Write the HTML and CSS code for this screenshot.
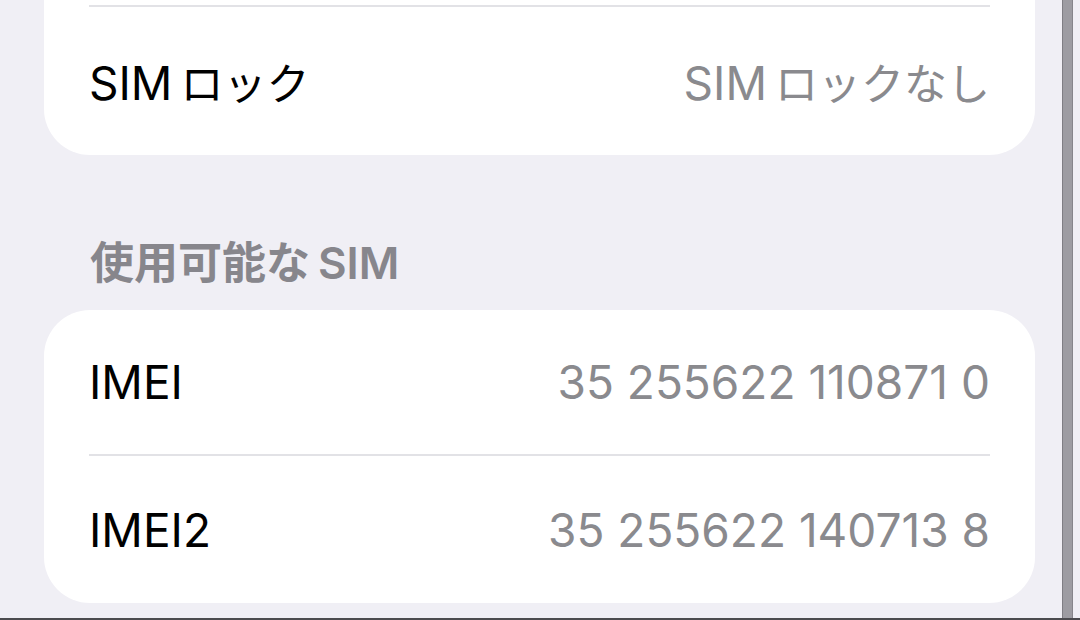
FILE: index.html
```html
<!DOCTYPE html>
<html lang="ja">
<head>
    <meta charset="UTF-8">
    <meta name="viewport" content="width=device-width, initial-scale=1.0">
    <title>SIM</title>
    <link rel="stylesheet" href="styles.css">
</head>
<body>
    <div class="screen">
        <div class="content">
            <div class="card card-top">
                <div class="row">
                    <span class="label">SIM<span class="gap"></span><span class="kana">ロック</span></span>
                    <span class="value">SIM<span class="gap"></span><span class="kana">ロックなし</span></span>
                </div>
            </div>

            <h2 class="section-title">使用可能な<span class="gap"></span>SIM</h2>

            <div class="card">
                <div class="row first">
                    <span class="label">IMEI</span>
                    <span class="value">35 255622 110871 0</span>
                </div>
                <div class="row last">
                    <span class="label">IMEI2</span>
                    <span class="value">35 255622 140713 8</span>
                </div>
            </div>
        </div>
        <div class="scroll-track">
            <div class="scroll-bar"></div>
        </div>
    </div>
</body>
</html>
```

FILE: styles.css
```css
body {
    margin: 0;
    background-color: #f0eff5;
    font-family: 'Inter', 'Noto Sans CJK JP', sans-serif;
    overflow: hidden;
}

.screen {
    display: flex;
    height: 620px;
    box-sizing: border-box;
    border-bottom: 2px solid #4b4b4f;
}

.content {
    flex: 1;
    padding: 0 27px 0 44px;
}

.card {
    background-color: #fff;
    border-radius: 46px;
}

.card-top {
    border-radius: 0 0 46px 46px;
    padding-top: 5px;
}

.row {
    display: flex;
    justify-content: space-between;
    align-items: center;
    margin: 0 45px 0 45px;
    height: 150px;
    box-sizing: border-box;
    border-top: 2px solid #e2e2e6;
    font-size: 46px;
}

.row.first {
    border-top: none;
    height: 144px;
}

.row.last {
    height: 149px;
}

.label {
    color: #000;
}

.value {
    color: #8a8a8e;
}

.kana {
    font-size: 43px;
}

.gap {
    display: inline-block;
    width: 8px;
}

.section-title {
    margin: 80px 0 19px 46px;
    font-size: 44px;
    font-weight: 600;
    line-height: 56px;
    color: #87868c;
}

.scroll-track {
    width: 18px;
    display: flex;
}

.scroll-bar {
    width: 9px;
    background-color: #9d9ca2;
    border-left: 1px solid #7f7e84;
    border-right: 1px solid #86858b;
}
```
